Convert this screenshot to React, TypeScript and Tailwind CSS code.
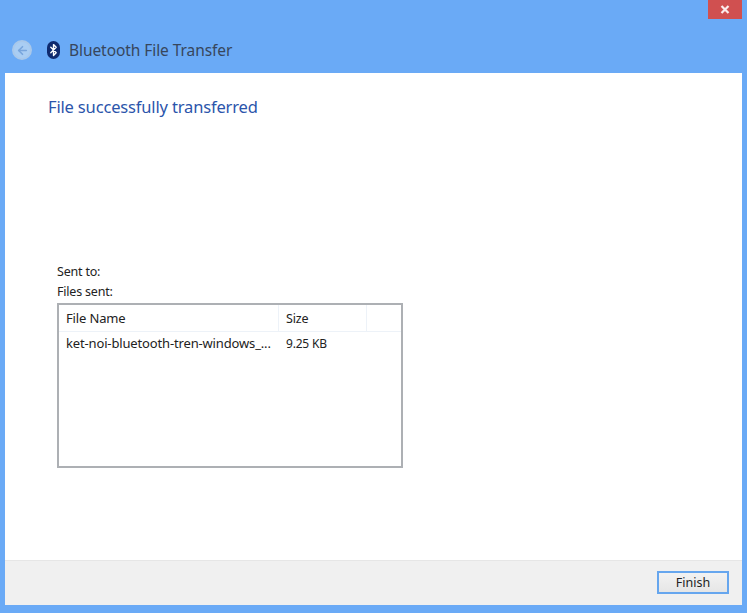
import { ArrowLeft, Bluetooth } from 'lucide-react'

const font = { fontFamily: '"Noto Sans", sans-serif' }

export default function App() {
  return (
    <div style={font} className="flex h-[613px] w-[747px] flex-col overflow-hidden bg-[#6aaaf6]">
      {/* title bar */}
      <div className="flex h-[19px] justify-end pr-[5px]">
        <div className="flex w-[34px] items-center justify-center bg-[#d05050]">
          <svg width="10" height="9" viewBox="0 0 10 9">
            <path d="M1.5 1 L8.5 8 M8.5 1 L1.5 8" stroke="#fbecec" strokeWidth="2.2" />
          </svg>
        </div>
      </div>

      {/* back button + heading */}
      <div className="flex h-[54px] items-center pl-[12px] pt-[8px]">
        <div className="flex h-[20px] w-[20px] items-center justify-center rounded-full border-2 border-[#a9c8ea] bg-[#a9cdf3]">
          <ArrowLeft className="h-[13px] w-[13px] text-[#78a5dc]" strokeWidth={3} />
        </div>
        <div className="ml-[15px] flex h-[18px] w-[13px] items-center justify-center rounded-[7px] bg-[#0f2a6e]">
          <Bluetooth className="h-[14px] w-[14px] text-white" strokeWidth={2.5} />
        </div>
        <span className="ml-[9px] pt-[2px] text-[15.5px] tracking-[-0.07px] text-[#37465c]">Bluetooth File Transfer</span>
      </div>

      {/* client area */}
      <div className="mx-[5px] flex h-[532px] flex-col bg-white">
        <div className="flex-1 pl-[43px] pt-[22px]">
          <h1 className="text-[16.5px] leading-6 tracking-[-0.16px] text-[#2b55ab]">File successfully transferred</h1>

          <div className="ml-[9px] mt-[143px] text-[#222]">
            <div className="h-[20px] text-[12.5px] leading-[20px] tracking-[-0.2px]">Sent to:</div>
            <div className="h-[20px] text-[12.5px] leading-[20px] tracking-[-0.2px]">Files sent:</div>
            <div className="mt-[1px] h-[165px] w-[346px] border-2 border-[#adb0b4] bg-white">
              <div className="flex h-[27px] border-b border-[#edf2f8] text-[13px] tracking-[-0.15px]">
                <div className="w-[220px] border-r border-[#edf2f8] pl-[7px] leading-[27px]">File Name</div>
                <div className="w-[88px] border-r border-[#edf2f8] pl-[7px] text-[12.5px] leading-[27px]">Size</div>
              </div>
              <div className="flex h-[24px] leading-[23px]">
                <div className="w-[220px] truncate pl-[7px] text-[13px] tracking-[-0.15px]">ket-noi-bluetooth-tren-windows_...</div>
                <div className="pl-[7px] text-[12px] tracking-[-0.2px]">9.25 KB</div>
              </div>
            </div>
          </div>
        </div>

        {/* footer */}
        <div className="flex h-[45px] items-start justify-end border-t border-[#e6e6e6] bg-[#f0f0f0] pr-[13px] pt-[10px]">
          <button className="h-[23px] w-[72px] border-2 border-[#66a6ee] bg-gradient-to-b from-[#f2f2f2] to-[#e6e6e6] text-[12.5px] leading-[18px] text-[#222]">
            Finish
          </button>
        </div>
      </div>
    </div>
  )
}
